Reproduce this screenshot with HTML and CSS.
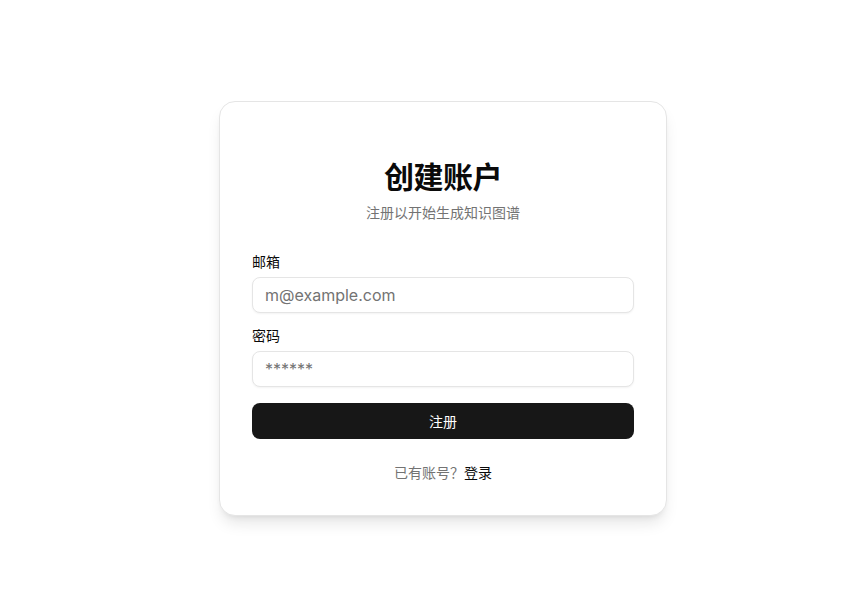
FILE: index.html
```html
<!DOCTYPE html>
<html lang="zh-CN">
<head>
  <meta charset="UTF-8" />
  <title>创建账户</title>
  <link rel="stylesheet" href="styles.css">
</head>
<body>
  <div class="page">
    <div class="card">
      <div class="card-header">
        <h1>创建账户</h1>
        <p class="subtitle">注册以开始生成知识图谱</p>
      </div>

      <form class="form">
        <div class="field">
          <label for="email">邮箱</label>
          <input type="email" id="email" placeholder="m@example.com" />
        </div>
        <div class="field">
          <label for="password">密码</label>
          <input type="text" id="password" placeholder="******" />
        </div>
        <button type="button" class="submit">注册</button>
      </form>

      <p class="footer">已有账号？<a href="#">登录</a></p>
    </div>
  </div>
</body>
</html>
```

FILE: styles.css
```css
:root {
  --text: #0a0a0a;
  --muted: #737373;
  --border: #e5e5e5;
  --primary: #171717;
}

* {
  box-sizing: border-box;
}

body {
  margin: 0;
  background: #fff;
  font-family: Inter, "Noto Sans CJK SC", sans-serif;
  color: var(--text);
}

.page {
  min-height: 100vh;
  padding: 101px 0 0 219px;
}

.card {
  width: 448px;
  padding: 57px 32px 32px;
  border: 1px solid var(--border);
  border-radius: 16px;
  background: #fff;
  box-shadow: 0 10px 15px -3px rgba(0, 0, 0, 0.1), 0 4px 6px -4px rgba(0, 0, 0, 0.1);
}

.card-header {
  text-align: center;
}

h1 {
  margin: 0;
  font-size: 30px;
  line-height: 36px;
  font-weight: 700;
  letter-spacing: -0.5px;
}

.subtitle {
  margin: 8px 0 0;
  font-size: 14px;
  line-height: 20px;
  color: var(--muted);
}

.form {
  margin-top: 32px;
  display: flex;
  flex-direction: column;
  gap: 16px;
}

.field {
  display: flex;
  flex-direction: column;
  gap: 8px;
}

.field label {
  font-size: 14px;
  line-height: 14px;
  font-weight: 400;
}

.field input {
  height: 36px;
  padding: 4px 12px;
  font-family: inherit;
  font-size: 16px;
  color: var(--text);
  border: 1px solid var(--border);
  border-radius: 8px;
  outline: none;
  box-shadow: 0 1px 2px rgba(0, 0, 0, 0.05);
}

.field input::placeholder {
  color: var(--muted);
}

.submit {
  height: 36px;
  border: none;
  border-radius: 8px;
  background: var(--primary);
  color: #fff;
  font-family: inherit;
  font-size: 14px;
  font-weight: 400;
  cursor: pointer;
}

.footer {
  margin: 24px 0 0;
  text-align: center;
  font-size: 14px;
  line-height: 20px;
  color: var(--muted);
}

.footer a {
  color: var(--text);
  text-decoration: none;
}
```
